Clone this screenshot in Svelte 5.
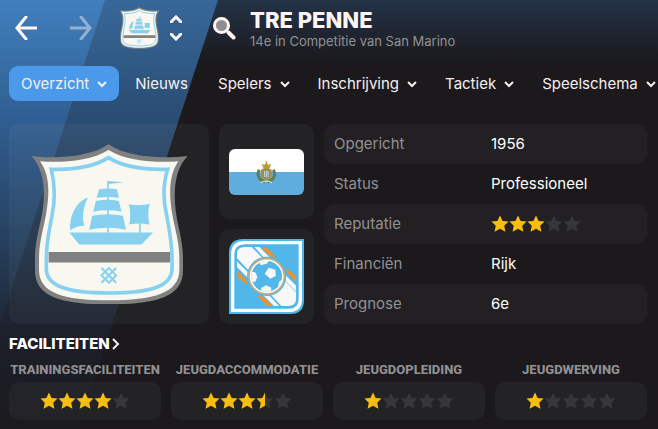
<script>
    let nav = [
        { label: 'Overzicht', menu: true, active: true },
        { label: 'Nieuws' },
        { label: 'Spelers', menu: true },
        { label: 'Inschrijving', menu: true },
        { label: 'Tactiek', menu: true },
        { label: 'Speelschema', menu: true }
    ]

    let info = [
        { label: 'Opgericht', value: '1956' },
        { label: 'Status', value: 'Professioneel' },
        { label: 'Reputatie', stars: 3 },
        { label: 'Financiën', value: 'Rijk' },
        { label: 'Prognose', value: '6e' }
    ]

    let facilities = [
        { label: 'Trainingsfaciliteiten', stars: 4 },
        { label: 'Jeugdaccommodatie', stars: 3.5 },
        { label: 'Jeugdopleiding', stars: 1 },
        { label: 'Jeugdwerving', stars: 1 }
    ]

    const starPath = 'M9 0.500 L11.600 6 L17.500 6.600 L13.200 10.700 L14.400 16.700 L9 13.800 L3.600 16.700 L4.800 10.700 L0.500 6.600 L6.400 6 Z'
    const halfStarPath = 'M9 0.500 V13.800 L3.600 16.700 L4.800 10.700 L0.500 6.600 L6.400 6 Z'
</script>

{#snippet stars(count)}
    <span class="stars" role="img" aria-label="{count} van 5 sterren">
        {#each [0, 1, 2, 3, 4] as i}
            <svg viewBox="0 0 18 18">
                <path class="star-off" d={starPath} />
                {#if count >= i + 1}
                    <path class="star-on" d={starPath} />
                {:else if count > i}
                    <path class="star-on" d={halfStarPath} />
                {/if}
            </svg>
        {/each}
    </span>
{/snippet}

{#snippet chevron()}
    <svg class="chevron" viewBox="0 0 10 10"><path d="M1 3 L5 7 L9 3" /></svg>
{/snippet}

{#snippet crest()}
    <svg class="crest" viewBox="91 100 472 484">
        <path fill="#808080" d="M92 136 C160 144 265 142 324 101 C383 142 490 144 562 136 C526 172 518 235 526 300 C532 350 548 390 548 445 V480 C548 558 470 582 324 582 C180 582 103 558 103 480 V445 C103 390 118 350 126 300 C135 235 128 172 92 136 Z" />
        <path fill="#f8f8f1" d="M118 152 C180 157 270 152 324 118 C378 152 470 157 534 152 C508 190 505 240 514 300 C521 350 537 390 537 445 V478 C537 548 460 570 324 570 C188 570 115 548 115 478 V445 C115 390 131 350 138 300 C147 240 146 190 118 152 Z" />
        <path fill="none" stroke="#87d0f0" stroke-width="11" d="M152 176 C214 178 279 169 324 141 C369 169 439 178 502 176 C486 225 488 265 498 310 C506 355 515 395 515 445 V475 C515 528 450 548 326 548 C202 548 137 528 137 475 V445 C137 395 147 355 155 310 C164 265 164 225 152 176 Z" />
        <path fill="#808080" d="M144 425 H509 V456 H144 Z" />
        <g fill="#87d0f0">
            <path d="M320 211 H324 L370 215 L325 220 V366 H320 Z" />
            <path d="M296 236 Q324 231 350 236 L355 262 Q322 256 288 262 Z" />
            <path d="M286 271 Q323 264 355 271 L363 304 Q322 295 278 304 Z" />
            <path d="M275 316 Q323 306 367 316 L377 358 Q322 345 266 358 Z" />
            <path d="M262 260 C220 278 206 325 209 359 Q228 346 252 346 C242 318 249 290 262 260 Z" />
            <path d="M385 281 Q417 288 448 280 Q439 312 448 343 Q417 335 386 342 Q393 312 385 281 Z" />
            <path d="M416 336 H421 V367 H416 Z" />
            <path d="M206 366 H458 L423 402 H236 Z" />
        </g>
        <path fill="none" stroke="#87d0f0" stroke-width="6" d="M303 473 L347 517 M347 473 L303 517 M303 495 L325 473 L347 495 L325 517 Z" />
    </svg>
{/snippet}

<div class="page">
    <svg class="backdrop" width="220" height="429" aria-hidden="true">
        <defs>
            <linearGradient id="bright" x1="0" y1="0" x2="0" y2="1">
                <stop offset="0" stop-color="#4080be" />
                <stop offset="0.27" stop-color="#315f93" />
                <stop offset="0.52" stop-color="#274566" />
                <stop offset="0.78" stop-color="#1e2532" />
                <stop offset="1" stop-color="#1b1a1f" />
            </linearGradient>
            <linearGradient id="deep" x1="0" y1="0" x2="0" y2="1">
                <stop offset="0" stop-color="#37689a" />
                <stop offset="0.25" stop-color="#2c4f76" />
                <stop offset="0.52" stop-color="#233650" />
                <stop offset="0.8" stop-color="#1c1f28" />
                <stop offset="1" stop-color="#1b1a1e" />
            </linearGradient>
        </defs>
        <path fill="url(#deep)" d="M0 0 H218 L78 429 H0 Z" />
        <path fill="url(#bright)" d="M0 0 H105 L0 325 V429 H0 Z" />
    </svg>

    <header>
        <button class="icon" aria-label="Terug">
            <svg width="22" height="24" viewBox="0 0 22 24"><path d="M22 12 H2 M11 1 L2 12 L11 23" /></svg>
        </button>
        <button class="icon forward" aria-label="Vooruit" disabled>
            <svg width="22" height="24" viewBox="0 0 22 24"><path d="M0 12 H20 M11 1 L20 12 L11 23" /></svg>
        </button>
        <div class="club-switch">
            <div class="badge">{@render crest()}</div>
            <div class="steps">
                <button class="icon" aria-label="Vorige club">
                    <svg width="12" height="8" viewBox="0 0 12 8"><path d="M1 7 L6 2 L11 7" /></svg>
                </button>
                <button class="icon" aria-label="Volgende club">
                    <svg width="12" height="8" viewBox="0 0 12 8"><path d="M1 1 L6 6 L11 1" /></svg>
                </button>
            </div>
        </div>
        <button class="icon search" aria-label="Zoeken">
            <svg width="23" height="23" viewBox="0 0 23 23">
                <circle cx="8.500" cy="8.500" r="7" />
                <path d="M15.500 15.500 L20.500 20.500" />
            </svg>
        </button>
        <div class="title">
            <h1>TRE PENNE</h1>
            <p>14e in Competitie van San Marino</p>
        </div>
    </header>

    <nav>
        {#each nav as item}
            {#if item.menu}
                <button class="nav-item" class:active={item.active}>{item.label}{@render chevron()}</button>
            {:else}
                <a class="nav-item" href="#nieuws">{item.label}</a>
            {/if}
        {/each}
    </nav>

    <main>
        <div class="overview">
            <div class="panel club">{@render crest()}</div>
            <div class="side">
                <div class="panel">
                    <svg class="flag" width="75" height="46" viewBox="0 0 225 138">
                        <path fill="#fff" d="M0 0 H225 V69 H0 Z" />
                        <path fill="#5eaddd" d="M0 69 H225 V138 H0 Z" />
                        <path fill="none" stroke="#5f7f55" stroke-width="9" d="M91 62 C82 78 90 94 108 98 M133 62 C142 78 134 94 116 98" />
                        <path fill="#c09a35" d="M98 44 L106 48 L110 42 V36 H114 V42 L118 48 L127 44 L122 57 H103 Z" />
                        <path fill="#a98d45" d="M96 62 Q112 50 128 62 Q132 86 112 99 Q92 86 96 62 Z" />
                        <path fill="#5f8fae" d="M103 65 H121 V78 Q120 86 112 91 Q104 86 103 78 Z" />
                        <path stroke="#d5d8cc" stroke-width="3" d="M107 66 V84 M112 66 V86 M117 66 V84" />
                        <path fill="none" stroke="#d6dde2" stroke-width="4" d="M95 101 Q112 92 129 101" />
                    </svg>
                </div>
                <div class="panel">
                    <svg width="75" height="75" viewBox="57 372 225 225">
                        <defs>
                            <clipPath id="field"><path d="M104 396 H259 V548 Q259 573 235 573 H80 V420 Q80 396 104 396 Z" /></clipPath>
                            <clipPath id="ball"><circle cx="170" cy="484" r="46" /></clipPath>
                        </defs>
                        <path fill="#51b6e8" d="M99 372 H282 V555 Q282 597 240 597 H57 V414 Q57 372 99 372 Z" />
                        <path fill="none" stroke="#fff" stroke-width="10" d="M105 383 H271 V551 Q271 586 236 586 H68 V418 Q68 383 105 383 Z" />
                        <g clip-path="url(#field)">
                            <path fill="#f8f8fa" d="M82 396 H125 L260 533 V573 H214 L80 428 V396 Z" />
                            <path fill="#f8f8fa" d="M133 396 H148 L186 434 H168 Z M80 438 V455 L120 496 V478 Z" />
                            <path fill="#f8f8fa" d="M207 573 H192 L154 535 H172 Z M260 531 V514 L220 473 V491 Z" />
                            <path fill="#ef922c" d="M153 396 H169 L199 428 L180 424 Z M80 466 V485 L114 510 L108 494 Z" />
                            <path fill="#ef922c" d="M187 573 H171 L141 541 L160 545 Z M260 503 V484 L226 459 L232 475 Z" />
                        </g>
                        <circle cx="170" cy="484" r="59" fill="#51b6e8" />
                        <circle cx="170" cy="484" r="53" fill="#fff" stroke="#c7ad80" stroke-width="5" />
                        <circle cx="170" cy="484" r="46" fill="#51b6e8" />
                        <g fill="#f8f8fa" clip-path="url(#ball)">
                            <path d="M176 458 L196 464 L197 483 L181 491 L164 476 Z" />
                            <path d="M120 470 L137 472 L142 487 L135 501 L120 500 Z" />
                            <path d="M153 519 L168 511 L184 518 L182 535 H155 Z" />
                            <path d="M144 437 H178 L170 446 L152 451 Z" />
                            <path d="M207 500 L220 492 V520 L203 522 Z" />
                        </g>
                    </svg>
                </div>
            </div>
            <dl>
                {#each info as row}
                    <div class="row">
                        <dt>{row.label}</dt>
                        <dd>
                            {#if row.stars}
                                {@render stars(row.stars)}
                            {:else}
                                {row.value}
                            {/if}
                        </dd>
                    </div>
                {/each}
            </dl>
        </div>

        <h2>
            <a href="#faciliteiten">FACILITEITEN<svg width="8" height="12" viewBox="0 0 8 12"><path d="M1 1 L6 6 L1 11" /></svg></a>
        </h2>
        <div class="facilities">
            {#each facilities as facility}
                <section>
                    <h3>{facility.label}</h3>
                    <div class="panel">{@render stars(facility.stars)}</div>
                </section>
            {/each}
        </div>
    </main>
</div>

<style>
    :global(body) {
        background: #1b191c;
    }

    h1, h2, h3, p, dl, dd {
        margin: 0;
    }

    svg {
        display: block;
        flex: none;
    }

    button {
        border: none;
        background: none;
        padding: 0;
        color: inherit;
        font: inherit;
        cursor: pointer;
    }

    a {
        color: inherit;
        text-decoration: none;
    }

    .page {
        position: relative;
        box-sizing: border-box;
        min-height: 100vh;
        overflow: hidden;
        background: linear-gradient(#243347, #1b191c 62px) #1b191c;
        color: #fff;
        font-family: "Inter", "Liberation Sans", sans-serif;
        font-size: 15px;
        line-height: 20px;
    }

    .backdrop {
        position: absolute;
        top: 0;
        left: 0;
    }

    header, nav, main {
        position: relative;
    }

    header {
        display: flex;
        align-items: center;
        height: 56px;
        padding-left: 15px;
    }

    .icon path {
        fill: none;
        stroke: #fff4f4;
        stroke-width: 3;
        stroke-linecap: round;
    }

    .forward {
        margin-left: 33px;
        opacity: 0.45;
    }

    .club-switch {
        display: flex;
        align-items: center;
        gap: 10px;
        margin-left: 27px;
    }

    .badge {
        width: 41px;
    }

    .crest {
        width: 100%;
    }

    .steps {
        display: flex;
        flex-direction: column;
        gap: 10px;
    }

    .search {
        margin: 0 14px 0 31px;
    }

    .search circle {
        fill: #8e8d94;
        stroke: #fff4f4;
        stroke-width: 3;
    }

    .search path {
        stroke-width: 4;
    }

    .title {
        padding-top: 2px;
    }

    h1 {
        font-size: 22px;
        line-height: 24px;
        font-weight: 800;
        color: #fff4f4;
    }

    p {
        font-size: 13px;
        line-height: 18px;
        color: #919195;
    }

    nav {
        display: flex;
        gap: 4px;
        margin-top: 10px;
        padding-left: 9px;
        white-space: nowrap;
    }

    .nav-item {
        display: flex;
        flex: none;
        align-items: center;
        gap: 8px;
        height: 35px;
        padding: 0 12px;
        border-radius: 9px;
        color: #f5efef;
    }

    a.nav-item {
        padding-right: 14px;
    }

    .active {
        background: #4a99ea;
    }

    .chevron {
        width: 10px;
        height: 10px;
    }

    .chevron path, h2 path {
        fill: none;
        stroke: #f5efef;
        stroke-width: 2;
    }

    main {
        padding: 23px 11px 9px 9px;
    }

    .overview {
        display: grid;
        grid-template-columns: 200px 95px 1fr;
        gap: 10px;
    }

    .panel {
        display: flex;
        align-items: center;
        justify-content: center;
        border-radius: 10px;
        background: rgba(255, 255, 255, 0.04);
    }

    .club .crest {
        width: 157px;
    }

    .side {
        display: grid;
        grid-template-rows: 95px 95px;
        gap: 10px;
    }

    .flag {
        border-radius: 6px;
    }

    .row {
        display: grid;
        grid-template-columns: 157px 1fr;
        align-items: center;
        height: 40px;
        padding: 0 10px;
        border-radius: 10px;
    }

    .row:nth-child(odd) {
        background: rgba(255, 255, 255, 0.03);
    }

    dt {
        color: #919093;
    }

    .stars {
        display: flex;
    }

    .stars svg {
        width: 18px;
        height: 18px;
    }

    .star-on {
        fill: #f9bd0e;
    }

    .star-off {
        fill: #37363a;
    }

    h2 {
        margin-top: 10px;
        font-size: 15px;
        line-height: 20px;
        font-weight: 800;
    }

    h2 a {
        display: inline-flex;
        align-items: center;
        gap: 2px;
    }

    .facilities {
        display: grid;
        grid-template-columns: repeat(4, minmax(0, 1fr));
        gap: 10px;
        margin-top: 6px;
    }

    section .panel {
        height: 38px;
    }

    h3 {
        display: flex;
        justify-content: center;
        padding-bottom: 2px;
        font-family: Roboto, sans-serif;
        font-size: 13px;
        line-height: 20px;
        font-weight: 800;
        text-transform: uppercase;
        white-space: nowrap;
        color: #919093;
    }
</style>
